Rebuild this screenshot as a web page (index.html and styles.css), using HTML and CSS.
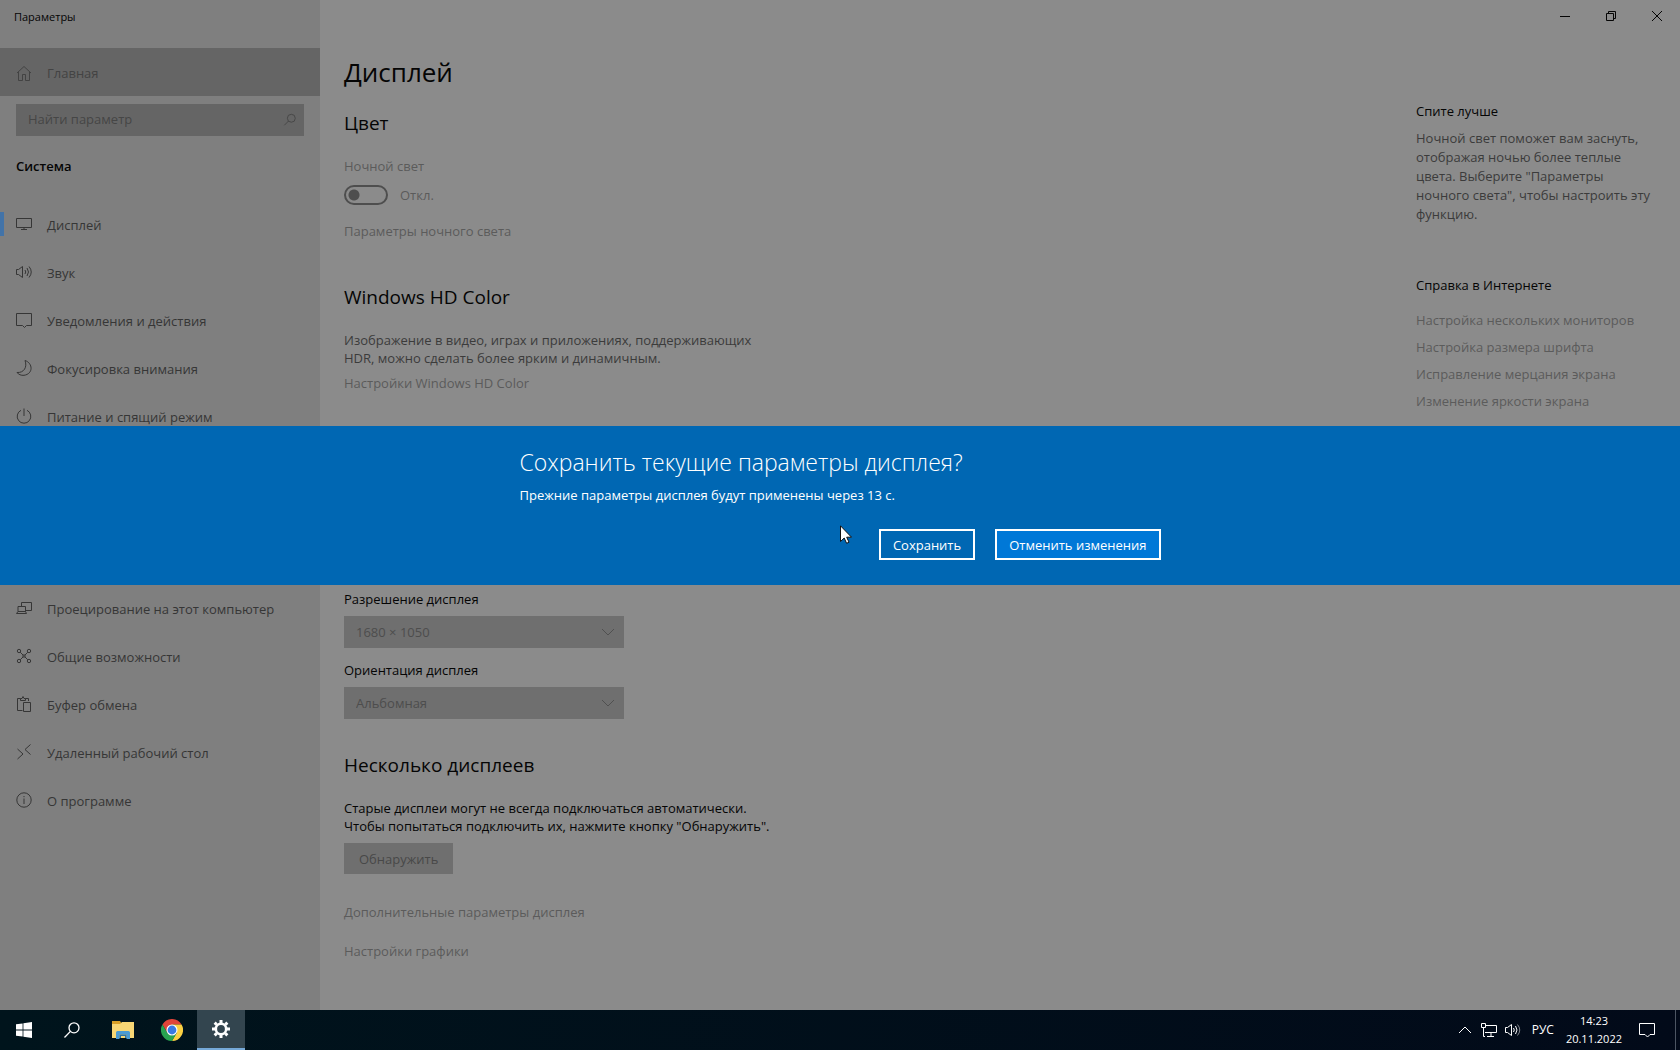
FILE: index.html
```html
<!DOCTYPE html>
<html lang="ru">
<head>
  <meta charset="UTF-8" />
  <meta name="viewport" content="width=device-width, initial-scale=1" />
  <title>Параметры</title>
  <link rel="stylesheet" href="styles.css">
</head>
<body>
  <div class="window">
    <!-- Боковое меню -->
    <aside class="sidebar">
      <div class="app-title">Параметры</div>
      <a class="home" href="#">
        <svg class="icon" viewBox="0 0 16 16"><path d="M1 8 8 1.500 15 8M2.500 7V15.500H6.500V9.500H9.500V15.500H13.500V7" /></svg>
        Главная
      </a>
      <div class="search">
        <input type="text" placeholder="Найти параметр" aria-label="Найти параметр" />
        <svg class="icon search-icon" viewBox="0 0 16 16"><circle cx="9.500" cy="6" r="4.500" /><path d="M6.300 9.200 1.500 14" /></svg>
      </div>
      <h2 class="group-title">Система</h2>
      <nav class="menu">
        <a class="menu-item active" href="#">
          <svg class="icon" viewBox="0 0 16 16"><path d="M.5 2.500H15.500V11.500H.5ZM8 11.500V13.500M5 13.500H11" /></svg>
          Дисплей
        </a>
        <a class="menu-item" href="#">
          <svg class="icon" viewBox="0 0 16 16"><path d="M.5 5.500H2.500L6.500 2.500V13.500L2.500 10.500H.5ZM9 6Q10.500 8 9 10M11 4Q14 8 11 12M13 2.500Q17.500 8 13 13.500" /></svg>
          Звук
        </a>
        <a class="menu-item" href="#">
          <svg class="icon" viewBox="0 0 16 16"><path d="M.5 1.500H15.500V13.500H10.500L8.500 15.500 6.500 13.500H.5Z" /></svg>
          Уведомления и действия
        </a>
        <a class="menu-item" href="#">
          <svg class="icon" viewBox="0 0 16 16"><path d="M9 .5C17 3 17.500 14 8 15.300C5 15.600 2.500 14.500 1 12.500C8 13 11.500 7 9 .5Z" /></svg>
          Фокусировка внимания
        </a>
        <a class="menu-item" href="#">
          <svg class="icon" viewBox="0 0 16 16"><path d="M8 .5V8M5 2.300A6.800 6.800 0 1 0 11 2.300" /></svg>
          Питание и спящий режим
        </a>
      </nav>
      <nav class="menu menu-lower">
        <a class="menu-item" href="#">
          <svg class="icon" viewBox="0 0 16 16"><path d="M5.500 6.500V2.500H15.500V10.500H10M2 6.500H9.500V11.500H2ZM.5 13.500H10.500L9.500 11.500H2Z" /></svg>
          Проецирование на этот компьютер
        </a>
        <a class="menu-item" href="#">
          <svg class="icon" viewBox="0 0 16 16"><circle cx="3" cy="3" r="1.700" /><circle cx="13" cy="3" r="1.700" /><circle cx="3" cy="13" r="1.700" /><circle cx="13" cy="13" r="1.700" /><path d="M4.200 4.200 7 7H9L11.800 4.200M4.200 11.800 7 9H9L11.800 11.800M7 7V9M9 7V9" /></svg>
          Общие возможности
        </a>
        <a class="menu-item" href="#">
          <svg class="icon" viewBox="0 0 16 16"><path d="M6.500 14.500H1.500V2.500H4.500M9.500 2.500H12.500V5M4.500 4.500V2.500H6L7 .5 8 2.500H9.500V4.500ZM7.500 6.500H14.500V15.500H7.500Z" /></svg>
          Буфер обмена
        </a>
        <a class="menu-item" href="#">
          <svg class="icon" viewBox="0 0 16 16"><path d="M1.500 5 7 10 1.500 15M14.500 .5 9 5.500 14.500 10.500" /></svg>
          Удаленный рабочий стол
        </a>
        <a class="menu-item" href="#">
          <svg class="icon" viewBox="0 0 16 16"><circle cx="8" cy="8" r="7.200" /><path d="M8 6.500V12M8 4V5.200" /></svg>
          О программе
        </a>
      </nav>
    </aside>

    <div class="content">
      <header class="caption">
        <button type="button" aria-label="Свернуть"><svg viewBox="0 0 10 10"><path d="M0 5.500H10" /></svg></button>
        <button type="button" aria-label="Восстановить"><svg viewBox="0 0 10 10"><path d="M.5 2.500H7.500V9.500H.5ZM2.500 2.500V.5H9.500V7.500H7.500" /></svg></button>
        <button type="button" aria-label="Закрыть"><svg viewBox="0 0 10 10"><path d="M0 0 10 10M10 0 0 10" /></svg></button>
      </header>

      <div class="columns">
        <main class="settings">
          <h1>Дисплей</h1>

          <section class="color">
            <h2>Цвет</h2>
            <label class="muted" for="nightLight">Ночной свет</label>
            <div class="toggle-row">
              <input type="checkbox" id="nightLight" class="toggle" />
              <span class="muted">Откл.</span>
            </div>
            <a class="link" href="#">Параметры ночного света</a>
          </section>

          <section class="hd-color">
            <h2>Windows HD Color</h2>
            <p class="dim">Изображение в видео, играх и приложениях, поддерживающих HDR, можно сделать более ярким и динамичным.</p>
            <a class="link" href="#">Настройки Windows HD Color</a>
          </section>

          <section class="resolution">
            <label for="resolution">Разрешение дисплея</label>
            <div class="select">
              <select id="resolution"><option>1680 × 1050</option></select>
              <svg viewBox="0 0 12 12"><path d="M0 3 6 9 12 3" /></svg>
            </div>
            <label for="orientation">Ориентация дисплея</label>
            <div class="select">
              <select id="orientation"><option>Альбомная</option></select>
              <svg viewBox="0 0 12 12"><path d="M0 3 6 9 12 3" /></svg>
            </div>
          </section>

          <section class="displays">
            <h2>Несколько дисплеев</h2>
            <p>Старые дисплеи могут не всегда подключаться автоматически. Чтобы попытаться подключить их, нажмите кнопку "Обнаружить".</p>
            <button type="button" class="detect">Обнаружить</button>
          </section>

          <div class="more">
            <a class="link" href="#">Дополнительные параметры дисплея</a>
            <a class="link" href="#">Настройки графики</a>
          </div>
        </main>

        <!-- Справка справа -->
        <aside class="help">
          <h3>Спите лучше</h3>
          <p class="dim">Ночной свет поможет вам заснуть, отображая ночью более теплые цвета. Выберите "Параметры ночного света", чтобы настроить эту функцию.</p>
          <h3>Справка в Интернете</h3>
          <div class="help-links">
            <a class="link" href="#">Настройка нескольких мониторов</a>
            <a class="link" href="#">Настройка размера шрифта</a>
            <a class="link" href="#">Исправление мерцания экрана</a>
            <a class="link" href="#">Изменение яркости экрана</a>
          </div>
        </aside>
      </div>
    </div>

    <!-- Запрос подтверждения -->
    <div class="dialog" role="dialog" aria-labelledby="dialogTitle">
      <div class="dialog-body">
        <h2 id="dialogTitle">Сохранить текущие параметры дисплея?</h2>
        <p>Прежние параметры дисплея будут применены через 13 с.</p>
        <div class="dialog-buttons">
          <button type="button">Сохранить</button>
          <button type="button" class="primary">Отменить изменения</button>
        </div>
      </div>
    </div>
    <svg class="cursor" viewBox="0 0 12 19"><path d="M.5 .8V16.500L4.200 13 6.600 18.300 9 17.200 6.700 12.200H11.500Z" /></svg>
  </div>

  <footer class="taskbar">
    <div class="launch">
      <button type="button" aria-label="Пуск"><svg class="i16" viewBox="0 0 16 16"><path fill="#fff" d="M0 2.300 6.600 1.400V7.600H0ZM7.400 1.300 16 0V7.600H7.400ZM0 8.400H6.600V14.600L0 13.700ZM7.400 8.400H16V16L7.400 14.700Z" /></svg></button>
      <button type="button" aria-label="Поиск"><svg class="i16" viewBox="0 0 16 16"><g fill="none" stroke="#fff" stroke-width="1.300"><circle cx="10" cy="5.800" r="5" /><path d="M6.400 9.400 .5 15.500" /></g></svg></button>
    </div>
    <div class="apps">
      <button type="button" aria-label="Проводник"><svg class="i22" viewBox="0 0 22 18"><path fill="#d9a027" d="M0 0H8L10 3H0Z" /><path fill="#f8d775" d="M0 3H8L10 1H22V17H0Z" /><path fill="#4a9bd4" d="M4 18V11.500Q4 10 5.500 10H16.500Q18 10 18 11.500V18H14.500V13.500H7.500V18Z" /><path fill="#2b73a8" d="M7.500 13.500H14.500V17H13V15H9V17H7.500Z" /></svg></button>
      <button type="button" aria-label="Chrome"><svg class="i22" viewBox="0 0 22 22"><path fill="#e0443a" d="M1.470 5.500A11 11 0 0 1 20.530 5.500H11L6.240 13.750Z" /><path fill="#fbd043" d="M11 5.500H20.530A11 11 0 0 1 11 22L15.760 13.750Z" /><path fill="#28a350" d="M1.470 5.500 6.240 13.750 11 16.500 15.760 13.750 11 22A11 11 0 0 1 1.470 5.500Z" /><circle cx="11" cy="11" r="5.500" fill="#fff" /><circle cx="11" cy="11" r="4.400" fill="#3979e3" /></svg></button>
      <button type="button" class="running" aria-label="Параметры"><svg class="i18" viewBox="0 0 18 18"><g fill="none" stroke="#fff"><circle cx="9" cy="9" r="5.200" stroke-width="2.600" /><path stroke-width="3" d="M9 0V3M9 15V18M0 9H3M15 9H18M2.640 2.640 4.760 4.760M13.240 13.240 15.360 15.360M2.640 15.360 4.760 13.240M13.240 4.760 15.360 2.640" /></g></svg></button>
    </div>
    <div class="tray">
      <svg class="chevron" viewBox="0 0 12 16"><path d="M0 11 6 5 12 11" /></svg>
      <svg viewBox="0 0 16 16"><path d="M5 3.500H15.500V10.500H4M10 10.500V14M6 14.500H13M.5 1.500H4.500V5.500H.5ZM2.500 5.500V14.500H4" /></svg>
      <svg viewBox="0 0 16 16"><path d="M.5 5.500H2.500L6.500 2.500V13.500L2.500 10.500H.5ZM8.500 6Q10 8 8.500 10M10.500 4Q13.500 8 10.500 12" /><path opacity=".5" d="M12.500 2.500Q17 8 12.500 13.500" /></svg>
      <span class="lang">РУС</span>
      <time class="clock" datetime="2022-11-20T14:23"><span>14:23</span><span>20.11.2022</span></time>
      <svg class="notify" viewBox="0 0 16 16"><path d="M.5 1.500H15.500V12.500H11L8.500 15 6 12.500H.5Z" /></svg>
      <div class="show-desktop"></div>
    </div>
  </footer>
</body>
</html>
```
FILE: styles.css
```css
* { box-sizing: border-box; }
body {
  font-family: 'Open Sans', 'Noto Sans', sans-serif;
  font-size: 13px; line-height: 18px; color: #050505;
  margin: 0; min-height: 100vh;
  display: flex; flex-direction: column;
  background: #8b8b8b;
}
h1, h2, h3, p { margin: 0; font-weight: 400; }
a { text-decoration: none; color: inherit; }
button, input, select { font: inherit; color: inherit; }
svg { fill: none; stroke: currentColor; flex: none; }

.window { flex: 1; display: flex; position: relative; }

/* Боковое меню */
.sidebar { width: 320px; flex: none; background: #7f7f7f; }
.app-title { height: 48px; padding: 8px 14px; font-size: 11px; }
.home {
  display: flex; align-items: center; gap: 15px;
  height: 48px; padding: 2px 16px 0; background: #656565; color: #434343;
}
.icon { width: 16px; height: 16px; }
.search { position: relative; margin: 8px 16px 0; }
.search input {
  display: block; width: 100%; height: 32px; padding: 0 12px 2px;
  border: none; background: #656565; outline: none;
}
.search input::placeholder { color: #464646; opacity: 1; }
.search-icon { position: absolute; right: 7px; top: 8px; width: 14px; color: #444; }
.group-title { padding: 21px 16px 26px; font-size: 13px; font-weight: 600; }
.menu-item {
  display: flex; align-items: center; gap: 15px;
  height: 48px; padding: 0 16px; color: #363636;
}
.menu-item .icon { margin-bottom: 2px; }
.menu-item.active { background: linear-gradient(#4273a8, #4273a8) 0 11px / 4px 24px no-repeat; }
.menu-lower { margin-top: 144px; }

/* Содержимое */
.content { flex: 1; display: flex; flex-direction: column; }
.caption { display: flex; justify-content: flex-end; height: 32px; }
.caption button {
  width: 46px; padding: 0; border: none; background: none;
  display: flex; align-items: center; justify-content: center;
}
.caption svg { width: 10px; height: 10px; }
.columns { flex: 1; display: flex; justify-content: space-between; }
.settings { width: 480px; padding: 22px 24px; }
.settings h1 { font-size: 26px; line-height: 36px; margin-bottom: 21px; }
.settings h2 { font-size: 19px; line-height: 24px; margin-bottom: 22px; }
.settings label, .settings .link { display: block; }
.muted, .link { color: #5b5b5b; }
.dim { color: #3b3b3b; }
.toggle-row { display: flex; align-items: center; gap: 12px; height: 20px; margin: 10px 0 17px; }
.toggle {
  appearance: none; width: 44px; height: 20px; margin: 0;
  border: 2px solid #4e4e4e; border-radius: 10px;
  background: radial-gradient(circle at 8px 8px, #4e4e4e 5px, transparent 6px);
}
.hd-color { margin-top: 45px; }
.hd-color .link { margin-top: 7px; }
.resolution { margin-top: 198px; }
.select { position: relative; width: 280px; margin: 8px 0 13px; }
.select select {
  appearance: none; display: block; width: 100%; height: 32px;
  padding: 0 12px; border: none; border-radius: 0;
  background: #6f6f6f; color: #4d4d4d;
}
.select svg { position: absolute; right: 10px; top: 10px; width: 12px; height: 12px; color: #505050; }
.displays { margin-top: 34px; }
.displays p { width: 440px; }
.detect {
  height: 31px; margin-top: 8px; padding: 0 15px;
  border: none; background: #6f6f6f; color: #484848;
}
.more { display: flex; flex-direction: column; gap: 21px; margin-top: 29px; }

.help { width: 264px; padding-top: 70px; padding-right: 20px; }
.help h3 { font-size: 13px; }
.help p { line-height: 19px; margin: 9px 0 52px; }
.help-links { display: flex; flex-direction: column; gap: 9px; margin-top: 17px; }

/* Диалог */
.dialog {
  position: absolute; left: 0; right: 0; top: 426px; height: 159px;
  display: flex; justify-content: center;
  background: #0067b3; color: #fff;
}
.dialog-body { width: 641px; padding-top: 19px; }
.dialog h2 { font-size: 23px; line-height: 34px; font-weight: 300; }
.dialog p { margin-top: 7px; }
.dialog-buttons { display: flex; justify-content: flex-end; gap: 20px; margin-top: 25px; }
.dialog button { height: 31px; padding: 0 12px; border: 2px solid #fff; background: none; }
.dialog .primary { background: #0078d7; }
.cursor {
  position: absolute; left: 840px; top: 525px; width: 12px; height: 19px;
  fill: #fff; stroke: #111;
}

/* Панель задач */
.taskbar {
  height: 40px; display: flex;
  background: linear-gradient(90deg, #00141c, #020a19); color: #fff;
}
.launch, .apps { display: flex; }
.apps { gap: 1px; margin-left: 3px; }
.taskbar button {
  width: 48px; padding: 0; border: none; background: none;
  display: flex; align-items: center; justify-content: center;
}
.taskbar button svg { stroke: none; }
.taskbar .running { background: #33454f; border-bottom: 2px solid #76a9d8; }
.i16 { width: 16px; height: 16px; }
.i18 { width: 18px; height: 18px; }
.i22 { width: 22px; height: 22px; }
.tray { display: flex; align-items: center; gap: 8px; margin-left: auto; font-size: 12px; }
.tray svg { width: 16px; height: 16px; }
.tray .chevron { width: 12px; margin-right: 2px; }
.lang { margin-left: 3px; }
.clock { display: flex; flex-direction: column; align-items: center; margin: 0 9px 0 4px; font-size: 11px; }
.tray .notify { margin-right: 12px; }
.show-desktop { width: 5px; height: 40px; border-left: 1px solid #4c5562; }
```
